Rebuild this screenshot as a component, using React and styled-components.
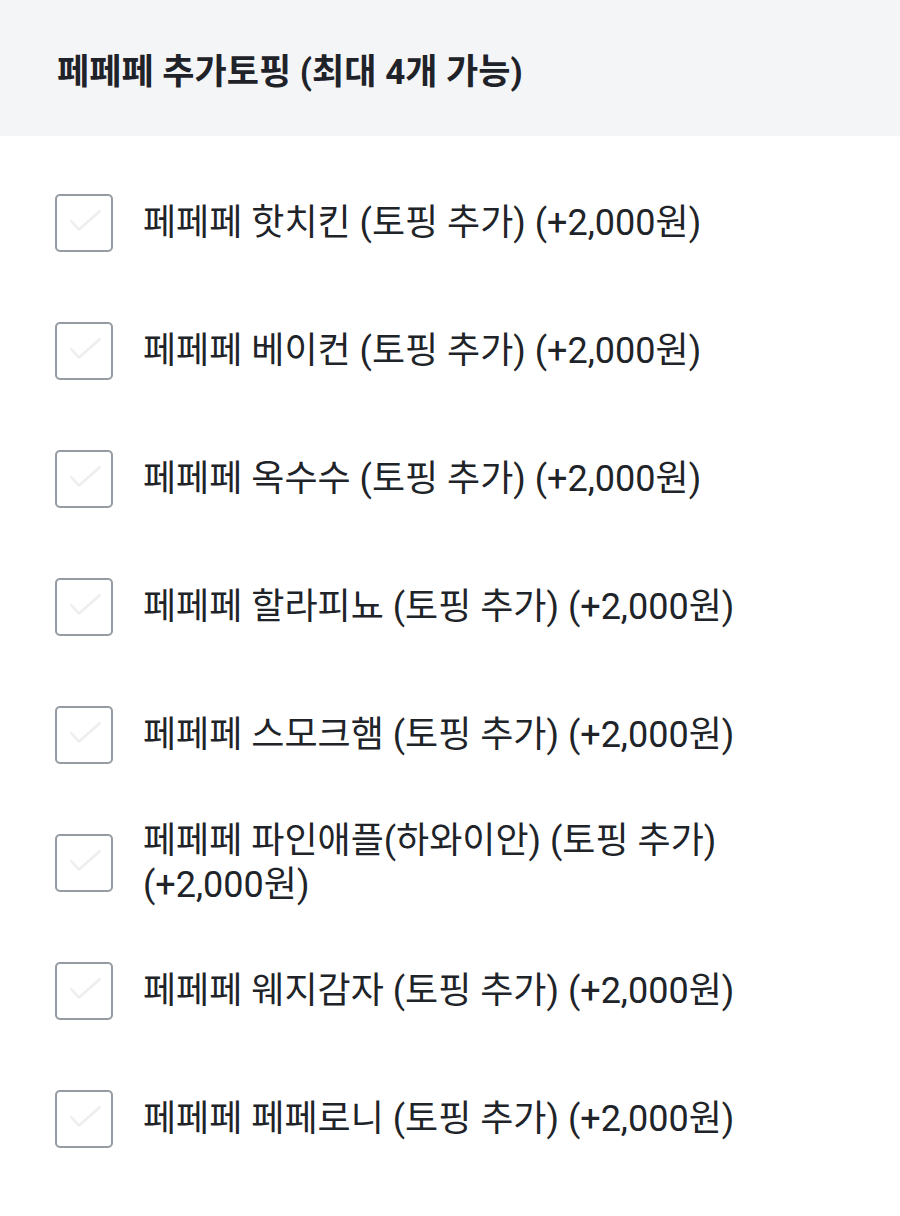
import React from "react";
import styled, { createGlobalStyle } from "styled-components";

const GlobalStyle = createGlobalStyle`
	body {
		margin: 0;
		background: #fff;
		font-family: "Roboto", "Noto Sans CJK KR", sans-serif;
		color: #202328;
	}
`;

const toppings = [
	"페페페 핫치킨 (토핑 추가) (+2,000원)",
	"페페페 베이컨 (토핑 추가) (+2,000원)",
	"페페페 옥수수 (토핑 추가) (+2,000원)",
	"페페페 할라피뇨 (토핑 추가) (+2,000원)",
	"페페페 스모크햄 (토핑 추가) (+2,000원)",
	"페페페 파인애플(하와이안) (토핑 추가) (+2,000원)",
	"페페페 웨지감자 (토핑 추가) (+2,000원)",
	"페페페 페페로니 (토핑 추가) (+2,000원)",
];

export default function App() {
	return (
		<>
			<GlobalStyle />
			<Section>
				<Header>
					<Title>페페페 추가토핑 (최대 4개 가능)</Title>
				</Header>
				<List>
					{toppings.map((name) => (
						<Row key={name}>
							<Box>
								<svg width='54' height='54' viewBox='2 2 54 54' fill='none'>
									<path d='M16 27l8 8.5L45 17' stroke='#eceef0' strokeWidth='2.4' strokeLinecap='round' strokeLinejoin='round' />
								</svg>
							</Box>
							<Label>{name}</Label>
						</Row>
					))}
				</List>
			</Section>
		</>
	);
}

const Section = styled.section`
	width: 900px;
`;

const Header = styled.header`
	height: 136px;
	background: #f4f5f7;
	display: flex;
	align-items: center;
	padding: 0 57px;
	box-sizing: border-box;
`;

const Title = styled.h2`
	margin: 0;
	font-size: 35px;
	font-weight: 700;
	color: #1f2329;
`;

const List = styled.ul`
	list-style: none;
	margin: 0;
	padding: 23px 0 0;
`;

const Row = styled.li`
	display: flex;
	align-items: center;
	gap: 30px;
	min-height: 128px;
	padding: 0 40px 0 55px;
	box-sizing: border-box;
`;

const Box = styled.span`
	flex: none;
	width: 58px;
	height: 58px;
	box-sizing: border-box;
	border: 2px solid #959ba3;
	border-radius: 5px;
	display: flex;
`;

const Label = styled.span`
	font-size: 36px;
	line-height: 44px;
	color: #202328;
	word-break: keep-all;
`;
